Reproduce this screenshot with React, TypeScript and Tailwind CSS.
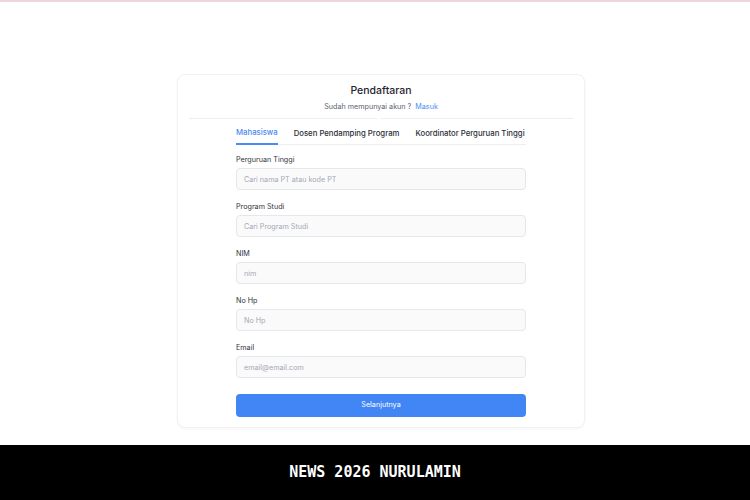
import React from "react";

const fields = [
  { label: "Perguruan Tinggi", placeholder: "Cari nama PT atau kode PT" },
  { label: "Program Studi", placeholder: "Cari Program Studi" },
  { label: "NIM", placeholder: "nim" },
  { label: "No Hp", placeholder: "No Hp" },
  { label: "Email", placeholder: "email@email.com" },
];

export default function App() {
  return (
    <div className="flex h-[500px] w-[750px] flex-col bg-white font-['Inter',sans-serif]">
      <div className="h-[2px] w-full bg-[#ecd6dc]" />

      <main className="flex flex-1 justify-center pt-[72px] pl-[12px]">
        <div className="h-[354px] w-[408px] rounded-lg border border-[#f1f1f3] bg-white px-[11px] pt-[10px] shadow-[0_1px_3px_rgba(0,0,0,0.04)]">
          <h2 className="text-center text-[10.5px] leading-[12px] font-medium text-[#1f2430]">
            Pendaftaran
          </h2>
          <p className="mt-[5px] text-center text-[7.2px] leading-[10px] text-[#5b6170]">
            Sudah mempunyai akun ?{" "}
            <a className="ml-[2px] text-[#4b8bf5]">Masuk</a>
          </p>
          <div className="mt-[6px] flex gap-[4px]">
            <div className="h-px w-[188px] bg-[#eeeef1]" />
            <div className="h-px flex-1 bg-[#eeeef1]" />
          </div>

          <div className="mx-auto w-[290px]">
            <div className="mt-[8px] flex gap-[16px] whitespace-nowrap border-b border-[#eeeef1] text-[7.75px] leading-[10px] font-medium">
              <button className="-mb-px border-b-2 border-[#4b8bf5] pb-[6px] text-[#4b8bf5]">
                Mahasiswa
              </button>
              <button className="pb-[6px] text-[#2a2e38]">Dosen Pendamping Program</button>
              <button className="pb-[6px] text-[#2a2e38]">Koordinator Perguruan Tinggi</button>
            </div>

            <form className="mt-[10px]">
              {fields.map((f) => (
                <div key={f.label} className="mb-[12px]">
                  <label className="block text-[7.2px] leading-[10px] text-[#30343e]">
                    {f.label}
                  </label>
                  <input
                    placeholder={f.placeholder}
                    className="mt-[3px] block h-[22px] w-full rounded-[4px] border border-[#e6e7ec] bg-[#fafafb] px-[7px] text-[7.2px] text-[#30343e] outline-none placeholder:text-[#a3a8b5]"
                  />
                </div>
              ))}
              <button
                type="button"
                className="mt-[16px] block h-[23px] w-full rounded-[4px] bg-[#4285f4] text-[7.2px] text-white"
              >
                Selanjutnya
              </button>
            </form>
          </div>
        </div>
      </main>

      <footer className="flex h-[55px] items-center justify-center bg-black">
        <span className="font-['DejaVu_Sans_Mono',monospace] text-[15px] font-bold text-white">
          NEWS 2026 NURULAMIN
        </span>
      </footer>
    </div>
  );
}
